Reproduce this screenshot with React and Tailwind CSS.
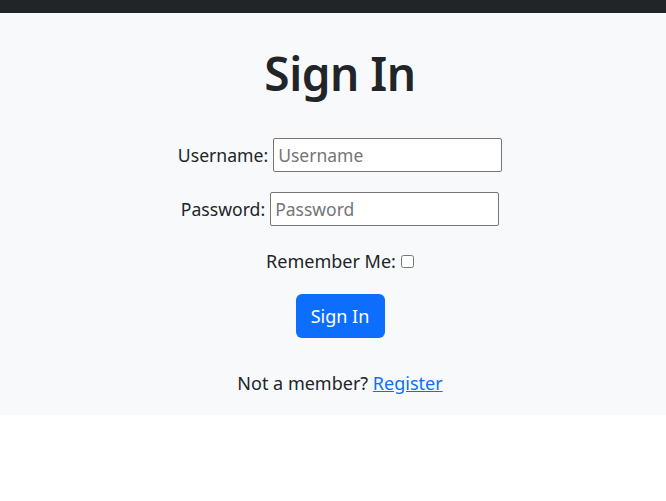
import React from 'react';

const App = () => {
  return (
    <div className="min-h-[501px] bg-white text-[#212529]" style={{ fontFamily: '"Noto Sans", "Open Sans", sans-serif' }}>
      {/* barra superior */}
      <div className="h-[13px] bg-[#212529]" />

      {/* formulario */}
      <section className="bg-[#f8f9fa] h-[402px] pl-[14px] flex flex-col items-center">
        <h1 className="mt-[31px] text-[46px] leading-[58px] font-semibold tracking-[-0.5px]">Sign In</h1>

        <div className="mt-[36px] flex items-center h-[34px] text-[17.6px]">
          <label htmlFor="username">Username:</label>
          <input
            id="username"
            type="text"
            placeholder="Username"
            className="ml-[5px] w-[229px] h-[34px] px-[4px] bg-white border border-[#767676] rounded-[2px] text-[17.5px] placeholder:text-[#757575] outline-none"
          />
        </div>

        <div className="mt-[20px] flex items-center h-[34px] text-[17.6px]">
          <label htmlFor="password">Password:</label>
          <input
            id="password"
            type="password"
            placeholder="Password"
            className="ml-[5px] w-[229px] h-[34px] px-[4px] bg-white border border-[#767676] rounded-[2px] text-[17.5px] placeholder:text-[#757575] outline-none"
          />
        </div>

        <div className="mt-[22px] flex items-center h-[27px] text-[18px]">
          <label htmlFor="remember">Remember Me:</label>
          <input id="remember" type="checkbox" className="ml-[5px] w-[13px] h-[13px]" />
        </div>

        <button className="mt-[19px] w-[89px] h-[44px] bg-[#0d6efd] text-white text-[18px] rounded-[6px]">
          Sign In
        </button>

        <p className="mt-[32px] text-[18px] leading-[27px]">
          Not a member? <a href="#" className="text-[#0d6efd] underline">Register</a>
        </p>
      </section>
    </div>
  );
};

export default App;
